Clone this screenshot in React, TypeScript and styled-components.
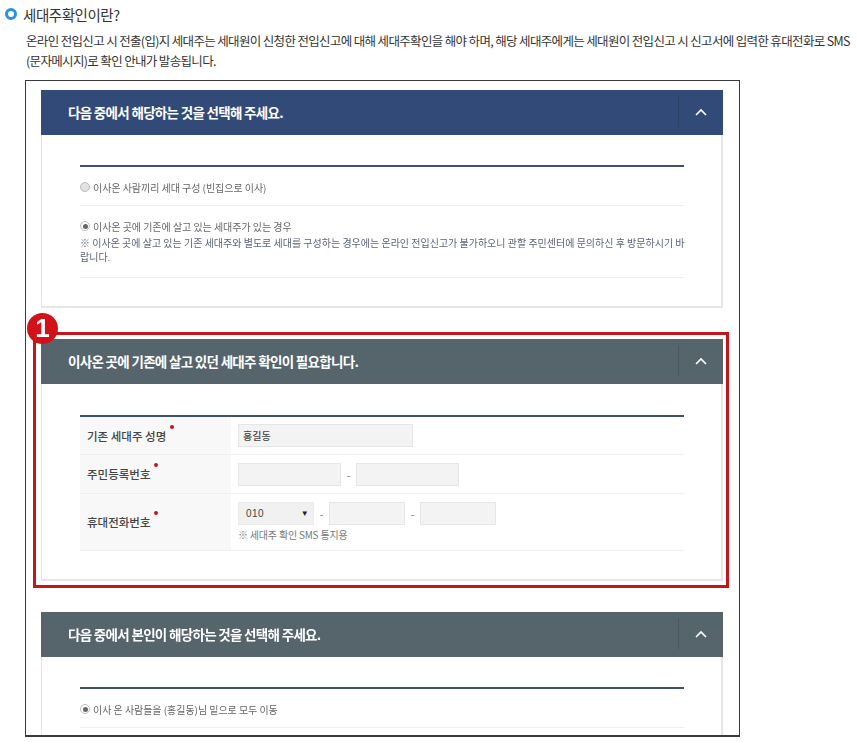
import React from "react";
import styled, { createGlobalStyle } from "styled-components";

const Global = createGlobalStyle`
  html, body { margin: 0; padding: 0; background: #fff; }
  body { font-family: "Noto Sans CJK KR", "Noto Sans", sans-serif; }
  * { box-sizing: border-box; }
`;

const Page = styled.div`
  width: 858px;
  height: 742px;
  overflow: hidden;
  background: #fff;
`;

const Heading = styled.h2`
  display: flex;
  align-items: center;
  gap: 6px;
  height: 28px;
  margin: 0;
  padding-left: 5px;
  font-size: 14.5px;
  font-weight: 400;
  letter-spacing: -0.45px;
  color: #333;
`;

const Bullet = styled.span`
  width: 12px;
  height: 12px;
  border-radius: 50%;
  border: 3.5px solid #2b8fe3;
  background: #fff;
`;

const Intro = styled.p`
  margin: 3px 0 0 26px;
  height: 49px;
  font-size: 12.5px;
  line-height: 20px;
  letter-spacing: -0.66px;
  white-space: nowrap;
  color: #333;
`;

const Frame = styled.div`
  width: 715px;
  height: 657px;
  margin-left: 25px;
  padding: 9px 0 0 15px;
  border: 1px solid #3a3a3a;
  border-bottom-width: 2px;
  overflow: hidden;
  filter: blur(0.3px);
`;

const Panel = styled.section<{ $h: number }>`
  width: 682px;
  height: ${(p) => p.$h}px;
  border: solid #e6e6e6;
  border-width: 0 2px 2px 1px;
  background: #fff;
`;

const PanelHead = styled.header<{ $tone: string }>`
  display: flex;
  align-items: center;
  justify-content: space-between;
  height: 45px;
  margin: 0 -2px 0 -1px;
  padding: 0 0 2px 27px;
  background: ${(p) => p.$tone};
`;

const PanelTitle = styled.h3`
  margin: 0;
  font-size: 13.5px;
  font-weight: 700;
  letter-spacing: -0.69px;
  color: #fff;
`;

const Toggle = styled.div`
  display: flex;
  align-items: center;
  justify-content: center;
  width: 45px;
  height: 31px;
  border-left: 1px solid rgba(0, 0, 0, 0.12);
`;

const PanelBody = styled.div<{ $top?: number }>`
  padding: ${(p) => p.$top ?? 30}px 37px 0 38px;
`;

const Rule = styled.div`
  height: 2px;
  background: #3d5070;
`;

const Choice = styled.div<{ $h: number }>`
  height: ${(p) => p.$h}px;
  padding-top: 12px;
  border-bottom: 1px solid #eeeeee;
`;

const ChoiceLabel = styled.label`
  display: flex;
  align-items: center;
  gap: 3px;
  height: 16px;
  font-size: 10px;
  letter-spacing: -0.04px;
  color: #666;
  white-space: nowrap;
`;

const Radio = styled.span<{ $on?: boolean }>`
  position: relative;
  display: inline-block;
  flex: none;
  width: 10px;
  height: 10px;
  border-radius: 50%;
  border: 1px solid #bbbbbb;
  background: ${(p) => (p.$on ? "#fff" : "#e2e2e2")};
  &::after {
    content: "";
    display: ${(p) => (p.$on ? "block" : "none")};
    position: absolute;
    inset: 1.5px;
    border-radius: 50%;
    background: #666;
  }
`;

const Note = styled.p`
  margin: 2px 0 0;
  font-size: 10px;
  line-height: 14px;
  color: #5a6478;
  white-space: nowrap;
`;

const Highlight = styled.div`
  position: relative;
  width: 696px;
  height: 256px;
  margin: 24px 0 24px -8px;
  padding: 4px 3px 4px 5px;
  border: 3px solid #c3161c;
`;

const Badge = styled.span`
  position: absolute;
  left: -9px;
  top: -22px;
  display: flex;
  align-items: center;
  justify-content: center;
  width: 31px;
  height: 31px;
  border-radius: 50%;
  background: #d3111a;
  color: #fff;
  font-family: "Liberation Sans", sans-serif;
  font-size: 26px;
  font-weight: 700;
`;

const Row = styled.div<{ $h: number }>`
  display: grid;
  grid-template-columns: 151px 1fr;
  height: ${(p) => p.$h}px;
  border-bottom: 1px solid #f0f0f0;
`;

const RowLabel = styled.div`
  display: flex;
  align-items: center;
  padding-left: 7px;
  background: #f8f8f8;
  font-size: 11.5px;
  font-weight: 500;
  color: #444;
`;

const Required = styled.i`
  margin-left: 4px;
  width: 4px;
  height: 4px;
  border-radius: 50%;
  background: #c3161c;
  transform: translateY(-9px);
`;

const RowField = styled.div`
  display: flex;
  flex-direction: column;
  justify-content: center;
  padding-left: 7px;
`;

const FieldLine = styled.div`
  display: flex;
  align-items: center;
`;

const Input = styled.input<{ $w: number }>`
  width: ${(p) => p.$w}px;
  height: 23px;
  padding: 0 4px;
  border: 1px solid #e6e6e6;
  border-radius: 0;
  background: #f3f3f3;
  font: 500 10px "Noto Sans CJK KR", sans-serif;
  color: #444;
  outline: none;
`;

const Dash = styled.span<{ $w: number }>`
  width: ${(p) => p.$w}px;
  text-align: center;
  font-size: 10px;
  color: #666;
`;

const SelectBox = styled.div`
  display: flex;
  align-items: center;
  justify-content: space-between;
  width: 76px;
  height: 23px;
  padding: 0 4px 0 7px;
  background: #f1f1f1;
  border: 1px solid #ececec;
  font: 400 10px "Liberation Sans", sans-serif;
  letter-spacing: 0.4px;
  color: #444;
`;

const Arrow = styled.span`
  font-size: 8px;
  color: #222;
`;

const Hint = styled.p`
  margin: 3px 0 0;
  font-size: 10px;
  line-height: 14px;
  letter-spacing: -0.2px;
  color: #777;
  white-space: nowrap;
`;

const Chevron = () => (
  <svg width="12" height="8" viewBox="0 0 12 8" fill="none">
    <polyline points="1,7 6,2 11,7" stroke="#fff" strokeWidth="1.6" />
  </svg>
);

const Head = ({ tone, title }: { tone: string; title: string }) => (
  <PanelHead $tone={tone}>
    <PanelTitle>{title}</PanelTitle>
    <Toggle>
      <Chevron />
    </Toggle>
  </PanelHead>
);

export default function App() {
  return (
    <Page>
      <Global />
      <Heading>
        <Bullet />
        세대주확인이란?
      </Heading>
      <Intro>
        온라인 전입신고 시 전출(입)지 세대주는 세대원이 신청한 전입신고에 대해 세대주확인을 해야 하며, 해당 세대주에게는 세대원이 전입신고 시 신고서에 입력한 휴대전화로 SMS
        <br />
        (문자메시지)로 확인 안내가 발송됩니다.
      </Intro>
      <Frame>
        <Panel $h={218}>
          <Head tone="#324a77" title="다음 중에서 해당하는 것을 선택해 주세요." />
          <PanelBody>
            <Rule />
            <Choice $h={39}>
              <ChoiceLabel>
                <Radio />
                이사온 사람끼리 세대 구성 (빈집으로 이사)
              </ChoiceLabel>
            </Choice>
            <Choice $h={72}>
              <ChoiceLabel>
                <Radio $on />
                이사온 곳에 기존에 살고 있는 세대주가 있는 경우
              </ChoiceLabel>
              <Note>
                ※ 이사온 곳에 살고 있는 기존 세대주와 별도로 세대를 구성하는 경우에는 온라인 전입신고가 불가하오니 관할 주민센터에 문의하신 후 방문하시기 바
                <br />
                랍니다.
              </Note>
            </Choice>
          </PanelBody>
        </Panel>
        <Highlight>
          <Badge>1</Badge>
          <Panel $h={242}>
            <Head tone="#56646c" title="이사온 곳에 기존에 살고 있던 세대주 확인이 필요합니다." />
            <PanelBody $top={31}>
              <Rule />
              <Row $h={38}>
                <RowLabel>
                  기존 세대주 성명
                  <Required />
                </RowLabel>
                <RowField>
                  <FieldLine>
                    <Input $w={175} defaultValue="홍길동" />
                  </FieldLine>
                </RowField>
              </Row>
              <Row $h={39}>
                <RowLabel>
                  주민등록번호
                  <Required />
                </RowLabel>
                <RowField>
                  <FieldLine>
                    <Input $w={103} />
                    <Dash $w={15}>-</Dash>
                    <Input $w={103} />
                  </FieldLine>
                </RowField>
              </Row>
              <Row $h={57}>
                <RowLabel>
                  휴대전화번호
                  <Required />
                </RowLabel>
                <RowField>
                  <FieldLine>
                    <SelectBox>
                      010
                      <Arrow>▼</Arrow>
                    </SelectBox>
                    <Dash $w={15}>-</Dash>
                    <Input $w={76} />
                    <Dash $w={15}>-</Dash>
                    <Input $w={76} />
                  </FieldLine>
                  <Hint>※ 세대주 확인 SMS 통지용</Hint>
                </RowField>
              </Row>
            </PanelBody>
          </Panel>
        </Highlight>
        <Panel $h={218}>
          <Head tone="#56646c" title="다음 중에서 본인이 해당하는 것을 선택해 주세요." />
          <PanelBody>
            <Rule />
            <Choice $h={39}>
              <ChoiceLabel>
                <Radio $on />
                이사 온 사람들을 (홍길동)님 밑으로 모두 이동
              </ChoiceLabel>
            </Choice>
          </PanelBody>
        </Panel>
      </Frame>
    </Page>
  );
}
